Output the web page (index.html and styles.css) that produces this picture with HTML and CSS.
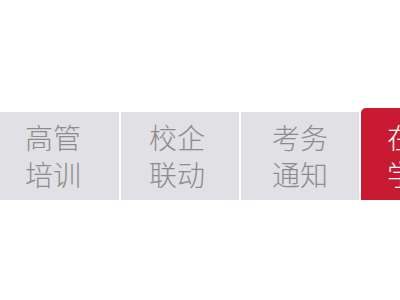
FILE: index.html
```html
<!DOCTYPE html>
<html lang="zh-CN">
<head>
<meta charset="utf-8">
<link rel="stylesheet" href="styles.css">
</head>
<body>
<nav class="tabs">
  <a class="tab tab-first">高管<br>培训</a>
  <a class="tab tab-second">校企<br>联动</a>
  <a class="tab">考务<br>通知</a>
  <a class="tab tab-active">在线<br>学习</a>
</nav>
</body>
</html>
```
FILE: styles.css
```css
html, body {
  margin: 0;
  padding: 0;
  background: #ffffff;
  overflow: hidden;
}
.tabs {
  display: flex;
  align-items: flex-end;
  gap: 2px;
  padding-top: 108px;
  width: 520px;
}
.tab {
  box-sizing: border-box;
  flex: 0 0 118px;
  height: 88px;
  background: #e1e0e4;
  color: #8c8c8c;
  font-family: "Noto Sans CJK SC", "Noto Sans", sans-serif;
  font-size: 28px;
  font-weight: 300;
  line-height: 37px;
  text-align: center;
  padding-top: 7px;
  text-decoration: none;
}
.tab-first {
  flex-basis: 119px;
  padding-right: 13px;
}
.tab-second {
  padding-right: 6px;
}
.tab-active {
  height: 92px;
  padding-top: 11px;
  background: #c81a30;
  color: #ffffff;
  border-radius: 5px 5px 0 0;
  text-align: left;
  padding-left: 26px;
}
```
